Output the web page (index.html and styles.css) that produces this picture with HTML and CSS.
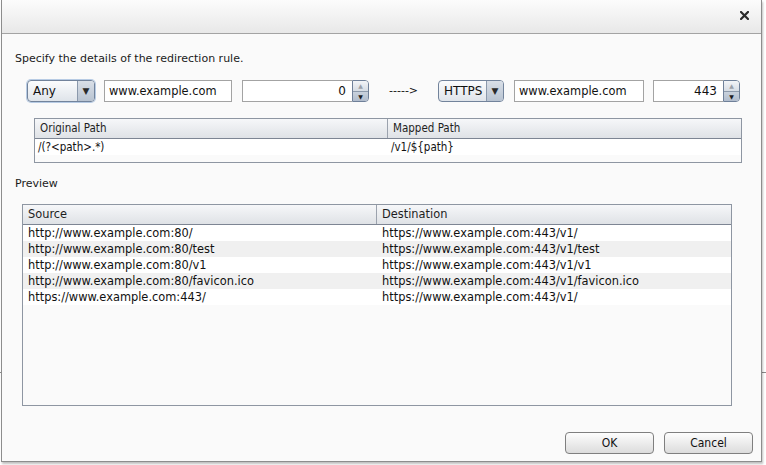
FILE: index.html
```html
<!DOCTYPE html>
<html>
<head>
<meta charset="utf-8">
<link rel="stylesheet" href="styles.css">
</head>
<body>
<div class="dialog">
  <div class="titlebar">
    <svg class="close" width="9" height="9" viewBox="0 0 9 9"><path d="M1 1 L8 8 M8 1 L1 8" stroke="#2b2b2b" stroke-width="2.2" stroke-linecap="square"/></svg>
  </div>
  <div class="content">
    <p class="intro">Specify the details of the redirection rule.</p>
    <div class="rule-row">
      <div class="combo focused combo-any"><span class="combo-text">Any</span><span class="combo-arrow">▼</span></div>
      <div class="field field-host1">www.example.com</div>
      <div class="spinner spinner-1"><div class="spin-text">0</div><div class="spin-btns"><span class="spin-up">▲</span><span class="spin-down">▼</span></div></div>
      <div class="arrow-text">-----&gt;</div>
      <div class="combo combo-https"><span class="combo-text">HTTPS</span><span class="combo-arrow">▼</span></div>
      <div class="field field-host2">www.example.com</div>
      <div class="spinner spinner-2"><div class="spin-text">443</div><div class="spin-btns"><span class="spin-up">▲</span><span class="spin-down">▼</span></div></div>
    </div>

    <div class="table map-table">
      <div class="thead">
        <div class="th col-a1">Original Path</div>
        <div class="th col-rest">Mapped Path</div>
      </div>
      <div class="row">
        <div class="td col-a1">/(?&lt;path&gt;.*)</div>
        <div class="td col-rest">/v1/${path}</div>
      </div>
    </div>

    <p class="preview-label">Preview</p>

    <div class="table preview-table">
      <div class="thead">
        <div class="th col-b1">Source</div>
        <div class="th col-rest">Destination</div>
      </div>
      <div class="row">
        <div class="td col-b1">http://www.example.com:80/</div>
        <div class="td col-rest">https://www.example.com:443/v1/</div>
      </div>
      <div class="row alt">
        <div class="td col-b1">http://www.example.com:80/test</div>
        <div class="td col-rest">https://www.example.com:443/v1/test</div>
      </div>
      <div class="row">
        <div class="td col-b1">http://www.example.com:80/v1</div>
        <div class="td col-rest">https://www.example.com:443/v1/v1</div>
      </div>
      <div class="row alt">
        <div class="td col-b1">http://www.example.com:80/favicon.ico</div>
        <div class="td col-rest">https://www.example.com:443/v1/favicon.ico</div>
      </div>
      <div class="row">
        <div class="td col-b1">https://www.example.com:443/</div>
        <div class="td col-rest">https://www.example.com:443/v1/</div>
      </div>
    </div>
  </div>
  <div class="footer">
    <button class="btn">OK</button>
    <button class="btn">Cancel</button>
  </div>
</div>
</body>
</html>
```

FILE: styles.css
```css
html, body {
  margin: 0;
  padding: 0;
}
body {
  width: 766px;
  height: 465px;
  overflow: hidden;
  background:
    linear-gradient(to bottom, transparent 372px, #8a8a8a 372px, #8a8a8a 373px, transparent 373px),
    #ffffff;
  font-family: "DejaVu Sans", "Liberation Sans", sans-serif;
  font-size: 11px;
  color: #111;
}
.dialog {
  margin-left: 1px;
  width: 761px;
  height: 462px;
  box-sizing: border-box;
  border: 1px solid #8d8d8d;
  border-top: none;
  background: #fafafa;
  box-shadow: 1px 2px 2px rgba(0,0,0,0.25);
  display: flex;
  flex-direction: column;
}
.titlebar {
  height: 33px;
  border-bottom: 1px solid #a3a3a3;
  background: linear-gradient(to bottom, #fcfcfc, #e8e8e8);
  display: flex;
  align-items: center;
  justify-content: flex-end;
  padding-right: 12px;
  flex: none;
}
.close {
  display: block;
  margin-top: -3px;
}
.content {
  flex: 1;
  padding: 0 0 0 12px;
}
.intro {
  margin: 18px 0 0 1px;
  line-height: 13px;
  color: #1a1a1a;
}
.rule-row {
  margin-top: 15px;
  margin-left: 13px;
  display: flex;
  align-items: center;
  height: 22px;
}
.combo {
  height: 22px;
  box-sizing: border-box;
  border: 1px solid #72839b;
  border-radius: 4px;
  background: linear-gradient(to bottom, #fbfcfd, #dfe4ea);
  display: flex;
  overflow: hidden;
}
.combo.focused {
  box-shadow: 0 0 0 1px #b7cbe4;
}
.combo-any { width: 68px; }
.combo-https { width: 66px; }
.combo-text {
  flex: 1;
  line-height: 20px;
  padding-left: 5px;
  font-size: 12px;
  color: #111;
}
.combo-arrow {
  width: 16px;
  border-left: 1px solid #8b99ac;
  background: linear-gradient(to bottom, #d9dfe7, #b8c3d1);
  font-size: 9px;
  line-height: 20px;
  text-align: center;
  color: #2a2a2a;
}
.field {
  height: 22px;
  box-sizing: border-box;
  border: 1px solid #a3a3a3;
  background: #fff;
  line-height: 20px;
  padding-left: 4px;
  font-size: 11.4px;
  margin-left: 9px;
}
.field-host1 { width: 128px; }
.field-host2 { width: 130px; margin-left: 10px; }
.spinner {
  display: flex;
  height: 22px;
  margin-left: 10px;
}
.spinner-2 { margin-left: 9px; }
.spin-text {
  box-sizing: border-box;
  border: 1px solid #a3a3a3;
  border-right: none;
  background: #fff;
  text-align: right;
  line-height: 20px;
  padding-right: 6px;
  font-size: 12px;
}
.spinner-1 .spin-text { width: 110px; }
.spinner-2 .spin-text { width: 70px; }
.spin-btns {
  width: 17px;
  box-sizing: border-box;
  border: 1px solid #6f8099;
  border-radius: 0 4px 4px 0;
  display: flex;
  flex-direction: column;
  overflow: hidden;
}
.spin-btns span {
  flex: 1;
  font-size: 6px;
  line-height: 10px;
  text-align: center;
}
.spin-up {
  background: linear-gradient(to bottom, #f2f4f7, #d6dce4);
  color: #9aa0a8;
  border-bottom: 1px solid #8d9aab;
}
.spin-down {
  background: linear-gradient(to bottom, #c9d2dd, #aebacb);
  color: #1e1e1e;
}
.arrow-text {
  width: 30px;
  margin: 0 19px 0 20px;
  font-size: 11px;
  color: #111;
  line-height: 20px;
}
.table {
  box-sizing: border-box;
  border: 1px solid #8e96a2;
  background: #fafafa;
}
.map-table {
  margin: 16px 0 0 20px;
  width: 708px;
  height: 45px;
}
.preview-table {
  margin: 0 0 0 8px;
  width: 710px;
  height: 202px;
}
.thead {
  display: flex;
  height: 20px;
  box-sizing: border-box;
  border-bottom: 1px solid #7d8593;
  background: linear-gradient(to bottom, #f6f7f9, #dfe2e6);
}
.th {
  box-sizing: border-box;
  line-height: 19px;
  padding-left: 5px;
  color: #1e1e1e;
  font-size: 11.4px;
}
.th.col-a1, .th.col-b1 {
  border-right: 1px solid #9ba2ad;
}
.map-table .th { font-family: "DejaVu Sans Condensed", "DejaVu Sans", sans-serif; font-size: 11.5px; }
.col-a1 { width: 353px; }
.col-b1 { width: 354px; }
.col-rest { flex: 1; }
.row {
  display: flex;
  height: 16px;
  background: #ffffff;
}
.row.alt { background: #f0f0f0; }
.td {
  box-sizing: border-box;
  line-height: 16px;
  padding-left: 5px;
  white-space: nowrap;
  font-size: 11.4px;
}
.map-table .td {
  font-family: "DejaVu Sans Condensed", "DejaVu Sans", sans-serif;
  font-size: 11.5px;
  padding-left: 3px;
}
.preview-label {
  margin: 14px 0 14px 1px;
  line-height: 13px;
  color: #1a1a1a;
}
.footer {
  flex: none;
  display: flex;
  justify-content: flex-end;
  gap: 10px;
  padding: 0 8px 7px 0;
}
.btn {
  width: 89px;
  height: 22px;
  box-sizing: border-box;
  border: 1px solid #7f7f7f;
  border-radius: 4px;
  background: linear-gradient(to bottom, #fdfdfd, #dcdcdc);
  font-family: "DejaVu Sans Condensed", "DejaVu Sans", sans-serif;
  font-size: 12px;
  color: #111;
  padding: 0;
}
```
